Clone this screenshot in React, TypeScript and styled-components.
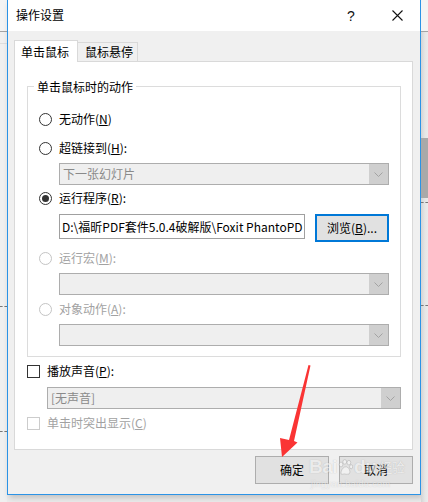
import React from "react";
import styled, { createGlobalStyle } from "styled-components";

const UI = `"Noto Sans CJK SC", "Noto Sans", sans-serif`;

const Global = createGlobalStyle`
  html, body { margin: 0; padding: 0; background: #ececec; }
  body { font-family: ${UI}; font-size: 12px; color: #000; }
  * { box-sizing: border-box; }
`;

const Page = styled.div`
  position: relative;
  width: 428px;
  height: 502px;
  display: flex;
  align-items: flex-start;
  overflow: hidden;
  background: #ececec;
`;

/* background window strips */
const LeftStrip = styled.div`
  width: 7px;
  height: 502px;
  display: flex;
  flex-direction: column;
  background: #f0f0f0;
`;
const StripTop = styled.div`
  height: 32px;
  flex: none;
  background: #f4f4f4;
  border-bottom: 1px solid #a3a3a3;
`;
const StripLine = styled.div<{ $top: number; $dashed?: boolean; $color?: string }>`
  flex: none;
  margin-top: ${(p) => p.$top}px;
  height: 0;
  border-top: 1px ${(p) => (p.$dashed ? "dashed" : "solid")} ${(p) => p.$color || "#8a8a8a"};
`;
const StripBlock = styled.div<{ $top: number; $h: number }>`
  flex: none;
  margin-top: ${(p) => p.$top}px;
  height: ${(p) => p.$h}px;
  background: #a9a9a9;
`;
const RightStrip = styled.div`
  width: 7px;
  height: 502px;
  display: flex;
  flex-direction: column;
  background: linear-gradient(90deg, #d4d4d4 0px, #e6e6e6 4px, #ebebeb 7px);
`;

const Dialog = styled.div`
  width: 414px;
  height: 495px;
  flex: none;
  display: flex;
  flex-direction: column;
  background: #f0f0f0;
  border: 1px solid #2b93e6;
  border-top: none;
  box-shadow: 2px 3px 6px rgba(0, 0, 0, 0.18);
`;

const TitleBar = styled.div`
  height: 31px;
  flex: none;
  display: flex;
  align-items: center;
  background: #fff;
  padding-left: 8px;
`;
const TitleText = styled.div`
  flex: 1;
  font-size: 12px;
  line-height: 16px;
  margin-top: -1px;
`;
const TitleButton = styled.div`
  width: 46px;
  height: 31px;
  display: flex;
  align-items: center;
  justify-content: center;
  font-family: "Liberation Sans", sans-serif;
  font-size: 14px;
  color: #111;
`;

const Body = styled.div`
  flex: 1;
  display: flex;
  flex-direction: column;
  padding: 9px 7px 10px 6px;
`;

const TabStrip = styled.div`
  height: 21px;
  display: flex;
  align-items: flex-end;
`;
const Tab = styled.div<{ $active?: boolean }>`
  position: relative;
  display: flex;
  align-items: center;
  border: 1px solid #d9d9d9;
  border-bottom: none;
  font-size: 12px;
  line-height: 16px;
  ${(p) =>
    p.$active
      ? `
    z-index: 1;
    height: 22px;
    margin-bottom: -1px;
    width: 64px;
    padding-left: 6px;
    background: #fff;
  `
      : `
    height: 19px;
    width: 61px;
    margin-left: -1px;
    padding-left: 7px;
    background: #f0f0f0;
  `}
`;

const Panel = styled.div`
  width: 399px;
  height: 389px;
  background: #fff;
  border: 1px solid #d9d9d9;
  padding: 0 11px 0 12px;
  display: flex;
  flex-direction: column;
`;

const Group = styled.fieldset`
  margin: 16px 0 0 0;
  width: 374px;
  height: 279px;
  border: 1px solid #dcdcdc;
  padding: 0 10px 0 11px;
  display: flex;
  flex-direction: column;
  min-width: 0;
`;
const Legend = styled.legend`
  margin-left: -5px;
  padding: 0 3px;
  font-size: 12px;
  line-height: 17px;
`;

const Row = styled.div<{ $mt: number; $indent?: number }>`
  display: flex;
  align-items: center;
  height: 20px;
  margin-top: ${(p) => p.$mt}px;
  margin-left: ${(p) => p.$indent || 0}px;
  flex: none;
`;

const Label = styled.span<{ $disabled?: boolean }>`
  font-size: 12px;
  line-height: 16px;
  color: ${(p) => (p.$disabled ? "#a2a2a2" : "#000")};
  white-space: nowrap;
`;

const RadioCircle = styled.span<{ $disabled?: boolean; $checked?: boolean }>`
  width: 13px;
  height: 13px;
  flex: none;
  border-radius: 50%;
  border: 1px solid ${(p) => (p.$disabled ? "#c4c4c4" : "#333")};
  background: #fff;
  margin-right: 7px;
  display: flex;
  align-items: center;
  justify-content: center;
  &::after {
    content: "";
    display: ${(p) => (p.$checked ? "block" : "none")};
    width: 7px;
    height: 7px;
    border-radius: 50%;
    background: #333;
  }
`;

const CheckBox = styled.span<{ $disabled?: boolean }>`
  width: 13px;
  height: 13px;
  flex: none;
  border: 1px solid ${(p) => (p.$disabled ? "#cccccc" : "#333")};
  background: #fff;
  margin-right: 7px;
`;

const Combo = styled.div<{ $mt: number; $indent: number; $w: number }>`
  flex: none;
  display: flex;
  height: 22px;
  width: ${(p) => p.$w}px;
  margin-top: ${(p) => p.$mt}px;
  margin-left: ${(p) => p.$indent}px;
  border: 1px solid #adadad;
  background: #efefef;
`;
const ComboText = styled.div`
  flex: 1;
  display: flex;
  align-items: center;
  padding-left: 3px;
  font-size: 12px;
  line-height: 16px;
  color: #8a8a8a;
  white-space: nowrap;
`;
const ComboDrop = styled.div`
  width: 19px;
  flex: none;
  display: flex;
  align-items: center;
  justify-content: center;
  background: #cfcfcf;
`;

const InputRow = styled.div`
  flex: none;
  display: flex;
  align-items: flex-start;
  margin-top: 6px;
  margin-left: 20px;
  gap: 10px;
  height: 28px;
`;
const PathInput = styled.div`
  width: 246px;
  height: 25px;
  border: 1px solid #a0a0a0;
  background: #fff;
  overflow: hidden;
  display: flex;
  align-items: center;
  padding-left: 2px;
  font-size: 12px;
  line-height: 16px;
  white-space: nowrap;
`;

const Button = styled.div<{ $focused?: boolean }>`
  width: 74px;
  height: 28px;
  flex: none;
  display: flex;
  align-items: center;
  justify-content: center;
  background: #e1e1e1;
  border: ${(p) => (p.$focused ? "2px solid #0078d7" : "1px solid #adadad")};
  font-size: 12px;
  line-height: 16px;
`;

const ButtonBar = styled.div`
  display: flex;
  justify-content: flex-end;
  gap: 10px;
  margin-top: 6px;
`;

const Overlay = styled.svg`
  position: absolute;
  left: 0;
  top: 0;
  pointer-events: none;
`;

const Watermark = styled.div`
  position: absolute;
  left: 309px;
  top: 455px;
  width: 96px;
  display: flex;
  flex-direction: column;
  pointer-events: none;
  opacity: 0.6;
`;
const WmMain = styled.div`
  display: flex;
  align-items: center;
  font-family: "Liberation Sans", Arial, sans-serif;
  font-weight: bold;
  font-size: 19px;
  line-height: 24px;
  color: rgba(255, 255, 255, 0.9);
  text-shadow: 0 0 1px rgba(90, 90, 90, 0.55);
  letter-spacing: -0.5px;
`;
const WmCjk = styled.span`
  font-family: ${UI};
  font-weight: normal;
  font-size: 13px;
  margin-left: 3px;
`;
const WmSub = styled.div`
  font-family: "Liberation Sans", Arial, sans-serif;
  font-size: 9px;
  line-height: 10px;
  margin-left: 2px;
  color: rgba(255, 255, 255, 0.85);
  text-shadow: 0 0 1px rgba(100, 100, 100, 0.5);
  letter-spacing: 0.4px;
`;

const Chevron = () => (
  <svg width="9" height="5" viewBox="0 0 9 5">
    <path d="M0.5 0.5 L4.5 4.5 L8.5 0.5" fill="none" stroke="#a3a3a3" strokeWidth="1" />
  </svg>
);

const DisabledCombo: React.FC<{ mt: number; indent: number; w: number; text?: string }> = ({
  mt,
  indent,
  w,
  text,
}) => (
  <Combo $mt={mt} $indent={indent} $w={w}>
    <ComboText>{text}</ComboText>
    <ComboDrop>
      <Chevron />
    </ComboDrop>
  </Combo>
);

export default function App() {
  return (
    <>
      <Global />
      <Page>
        <LeftStrip>
          <StripTop />
          <StripLine $top={11} $color="#dedede" />
          <StripLine $top={262} $dashed $color="#777" />
          <StripLine $top={124} $dashed $color="#777" />
        </LeftStrip>
        <Dialog>
          <TitleBar>
            <TitleText>操作设置</TitleText>
            <TitleButton>?</TitleButton>
            <TitleButton>
              <svg width="11" height="11" viewBox="0 0 11 11">
                <path d="M0.5 0.5 L10.5 10.5 M10.5 0.5 L0.5 10.5" stroke="#111" strokeWidth="1.1" />
              </svg>
            </TitleButton>
          </TitleBar>
          <Body>
            <TabStrip>
              <Tab $active>单击鼠标</Tab>
              <Tab>鼠标悬停</Tab>
            </TabStrip>
            <Panel>
              <Group>
                <Legend>单击鼠标时的动作</Legend>
                <Row $mt={14}>
                  <RadioCircle />
                  <Label>
                    无动作(<u>N</u>)
                  </Label>
                </Row>
                <Row $mt={9}>
                  <RadioCircle />
                  <Label>
                    超链接到(<u>H</u>):
                  </Label>
                </Row>
                <DisabledCombo mt={5} indent={20} w={330} text="下一张幻灯片" />
                <Row $mt={3}>
                  <RadioCircle $checked />
                  <Label>
                    运行程序(<u>R</u>):
                  </Label>
                </Row>
                <InputRow>
                  <PathInput>D:\福昕PDF套件5.0.4破解版\Foxit PhantoPD</PathInput>
                  <Button $focused>
                    浏览(<u>B</u>)...
                  </Button>
                </InputRow>
                <Row $mt={6}>
                  <RadioCircle $disabled />
                  <Label $disabled>
                    运行宏(<u>M</u>):
                  </Label>
                </Row>
                <DisabledCombo mt={5} indent={20} w={330} />
                <Row $mt={4}>
                  <RadioCircle $disabled />
                  <Label $disabled>
                    对象动作(<u>A</u>):
                  </Label>
                </Row>
                <DisabledCombo mt={5} indent={20} w={330} />
              </Group>
              <Row $mt={4}>
                <CheckBox />
                <Label>
                  播放声音(<u>P</u>):
                </Label>
              </Row>
              <DisabledCombo mt={6} indent={20} w={354} text="[无声音]" />
              <Row $mt={4}>
                <CheckBox $disabled />
                <Label $disabled>
                  单击时突出显示(<u>C</u>)
                </Label>
              </Row>
            </Panel>
            <ButtonBar>
              <Button>确定</Button>
              <Button>取消</Button>
            </ButtonBar>
          </Body>
        </Dialog>
        <RightStrip>
          <StripTop />
          <StripBlock $top={106} $h={60} />
          <StripLine $top={4} $dashed $color="#777" />
          <StripLine $top={102} $dashed $color="#777" />
        </RightStrip>
        <Watermark>
          <WmMain>
            Bai
            <svg width="15" height="17" viewBox="0 0 20 22" style={{ margin: "0 1px" }}>
              <g fill="rgba(255,255,255,0.9)" stroke="rgba(110,110,110,0.5)" strokeWidth="1">
                <ellipse cx="4" cy="7" rx="2.5" ry="3.2" />
                <ellipse cx="9" cy="3.5" rx="2.5" ry="3" />
                <ellipse cx="14.5" cy="4.5" rx="2.5" ry="3" />
                <ellipse cx="17.5" cy="10" rx="2" ry="2.8" />
                <path d="M4 17 Q6 10 11 10 Q16 11 16 17 Q16 21 11 20 Q8 19 6 20 Q3 21 4 17 Z" />
              </g>
            </svg>
            du
            <WmCjk>经验</WmCjk>
          </WmMain>
          <WmSub>jingyan.baidu.com</WmSub>
        </Watermark>
        <Overlay width="428" height="502" viewBox="0 0 428 502">
          <polygon
            points="308.5,365 310.5,365.5 294,441 297.5,442.5 282,457 280,438 289,440"
            fill="#fa3434"
          />
        </Overlay>
      </Page>
    </>
  );
}
